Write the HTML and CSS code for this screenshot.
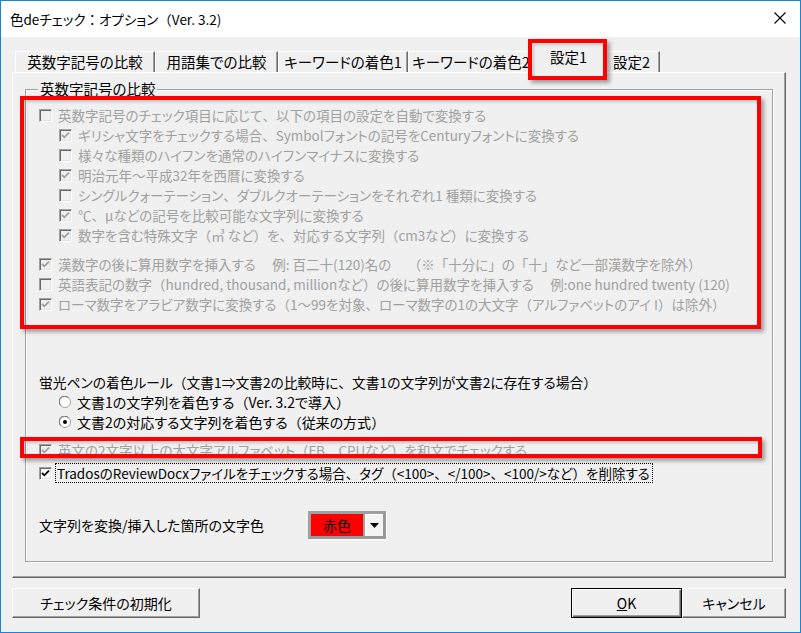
FILE: index.html
```html
<!DOCTYPE html>
<html lang="ja">
<head>
<meta charset="utf-8">
<title>色deチェック：オプション</title>
<link rel="stylesheet" href="styles.css">
</head>
<body>
<div class="window">
  <header class="titlebar">
    <span class="title">色deチェック<span class="fw">：</span>オプション<span class="fw">（</span>Ver. 3.2)</span>
    <svg class="close" width="12" height="12" viewBox="0 0 12 12"><path d="M0.5 0.5 L11.5 11.5 M11.5 0.5 L0.5 11.5" stroke="#000" stroke-width="1.1" fill="none"/></svg>
  </header>
  <div class="client">
    <div class="tabs">
      <div class="tab w1">英数字記号の比較</div>
      <div class="tab w2">用語集での比較</div>
      <div class="tab w3">キーワードの着色1</div>
      <div class="tab w4">キーワードの着色2</div>
      <div class="tab active">設定1</div>
      <div class="tab w6">設定2</div>
    </div>
    <div class="panel">
      <fieldset class="group">
        <legend>英数字記号の比較</legend>
        <div class="opts">
          <div class="row dis"><span class="cb"></span><span>英数字記号のチェック項目に応じて<span class="fw">、</span>以下の項目の設定を自動で変換する</span></div>
          <div class="row dis ind"><span class="cb on"><svg viewBox="0 0 11 11"><path d="M2 5 L4.3 7.3 L9 2.6"/></svg></span><span>ギリシャ文字をチェックする場合<span class="fw">、</span>Symbolフォントの記号をCenturyフォントに変換する</span></div>
          <div class="row dis ind"><span class="cb"></span><span>様々な種類のハイフンを通常のハイフンマイナスに変換する</span></div>
          <div class="row dis ind"><span class="cb on"><svg viewBox="0 0 11 11"><path d="M2 5 L4.3 7.3 L9 2.6"/></svg></span><span>明治元年～平成32年を西暦に変換する</span></div>
          <div class="row dis ind"><span class="cb"></span><span>シングルクォーテーション<span class="fw">、</span>ダブルクオーテーションをそれぞれ1 種類に変換する</span></div>
          <div class="row dis ind"><span class="cb on"><svg viewBox="0 0 11 11"><path d="M2 5 L4.3 7.3 L9 2.6"/></svg></span><span>℃<span class="fw">、</span>µなどの記号を比較可能な文字列に変換する</span></div>
          <div class="row dis ind"><span class="cb on"><svg viewBox="0 0 11 11"><path d="M2 5 L4.3 7.3 L9 2.6"/></svg></span><span>数字を含む特殊文字<span class="fw">（</span>㎥ など<span class="fw">）</span>を<span class="fw">、</span>対応する文字列<span class="fw">（</span>cm3など<span class="fw">）</span>に変換する</span></div>

          <div class="row dis gap1"><span class="cb on"><svg viewBox="0 0 11 11"><path d="M2 5 L4.3 7.3 L9 2.6"/></svg></span><span>漢数字の後に算用数字を挿入する　 例: 百二十(120)名の　 <span class="fw">（</span>※<span class="fw">「</span>十分に<span class="fw">」</span>の<span class="fw">「</span>十<span class="fw">」</span>など一部漢数字を除外<span class="fw">）</span></span></div>
          <div class="row dis"><span class="cb"></span><span>英語表記の数字<span class="fw">（</span>hundred, thousand, millionなど<span class="fw">）</span>の後に算用数字を挿入する　 例:one hundred twenty (120)</span></div>
          <div class="row dis"><span class="cb on"><svg viewBox="0 0 11 11"><path d="M2 5 L4.3 7.3 L9 2.6"/></svg></span><span>ローマ数字をアラビア数字に変換する<span class="fw">（</span>1～99を対象<span class="fw">、</span>ローマ数字の1の大文字<span class="fw">（</span>アルファベットのアイ I<span class="fw">）</span>は除外<span class="fw">）</span></span></div>

          <div class="heading">蛍光ペンの着色ルール<span class="fw">（</span>文書1⇒文書2の比較時に<span class="fw">、</span>文書1の文字列が文書2に存在する場合<span class="fw">）</span></div>
          <div class="row ind radio-row"><svg class="rb" width="12" height="12" viewBox="0 0 12 12"><circle cx="6" cy="6" r="5.5" fill="#fff" stroke="#a0a0a0"/><path d="M1.6 9.4 A5 5 0 0 1 9.4 1.6" stroke="#696969" fill="none"/></svg><span>文書1の文字列を着色する<span class="fw">（</span>Ver. 3.2で導入<span class="fw">）</span></span></div>
          <div class="row ind radio-row"><svg class="rb" width="12" height="12" viewBox="0 0 12 12"><circle cx="6" cy="6" r="5.5" fill="#fff" stroke="#a0a0a0"/><path d="M1.6 9.4 A5 5 0 0 1 9.4 1.6" stroke="#696969" fill="none"/><circle cx="6" cy="6" r="2" fill="#000"/></svg><span>文書2の対応する文字列を着色する<span class="fw">（</span>従来の方式<span class="fw">）</span></span></div>

          <div class="row dis gap3"><span class="cb on"><svg viewBox="0 0 11 11"><path d="M2 5 L4.3 7.3 L9 2.6"/></svg></span><span>英文の2文字以上の大文字アルファベット<span class="fw">（</span>FB<span class="fw">、</span>CPUなど<span class="fw">）</span>を和文でチェックする</span></div>
          <div class="row en trados"><span class="cb on"><svg viewBox="0 0 11 11"><path d="M2 5 L4.3 7.3 L9 2.6"/></svg></span><span class="focus">TradosのReviewDocxファイルをチェックする場合<span class="fw">、</span>タグ<span class="fw">（</span>&lt;100&gt;<span class="fw">、</span>&lt;/100&gt;<span class="fw">、</span>&lt;100/&gt;など<span class="fw">）</span>を削除する</span></div>

          <div class="color-row">
            <span class="color-label">文字列を変換/挿入した箇所の文字色</span>
            <div class="combo">
              <span class="combo-value">赤色</span>
              <span class="combo-btn"><svg width="9" height="5" viewBox="0 0 9 5"><path d="M0 0 H9 L4.5 5 Z" fill="#000"/></svg></span>
            </div>
          </div>
        </div>
      </fieldset>
    </div>
    <div class="buttons">
      <button class="btn reset">チェック条件の初期化</button>
      <div class="right-btns">
        <button class="btn ok default"><u>O</u>K</button>
        <button class="btn cancel">キャンセル</button>
      </div>
    </div>
  </div>

  <div class="hl hl-tab"></div>
  <div class="hl hl-1"></div>
  <div class="hl hl-2"></div>
</div>
</body>
</html>
```

FILE: styles.css
```css
* { box-sizing: border-box; }

body {
  margin: 0;
  background: #fff;
  font-family: "Noto Sans CJK JP", "Noto Sans", sans-serif;
  font-feature-settings: "palt";
  color: #000;
}

.fw { font-feature-settings: normal; }

.window {
  position: relative;
  width: 801px;
  height: 633px;
  border: 1px solid #1883d7;
  background: #f0f0f0;
  display: flex;
  flex-direction: column;
}

.titlebar {
  height: 36px;
  background: #fff;
  display: flex;
  align-items: center;
  justify-content: space-between;
  padding: 0 14px 0 9px;
}

.title {
  font-size: 13.5px;
  line-height: 20px;
}

.close { display: block; margin-top: -2px; }

.client {
  flex: 1;
  padding: 0 14px 0 11px;
  display: flex;
  flex-direction: column;
}

/* tabs */
.tabs {
  height: 35px;
  display: flex;
  align-items: flex-end;
  padding-left: 3px;
  position: relative;
  z-index: 2;
}

.tab {
  height: 21px;
  font-size: 14.5px;
  line-height: 20px;
  text-align: center;
  background: #f0f0f0;
  border-top: 1px solid #fff;
  border-left: 1px solid #fff;
  border-right: 1px solid #696969;
  box-shadow: inset -1px 0 0 #a0a0a0;
  white-space: nowrap;
}
.w1 { width: 140px; }
.w2 { width: 123px; }
.w3 { width: 130px; }
.w4 { width: 126px; }
.w6 { width: 57px; }

.tab.active {
  width: 73px;
  height: 31px;
  margin: 0 -2px -2px;
  line-height: 26px;
  position: relative;
  z-index: 3;
}

/* panel */
.panel {
  height: 506px;
  border: 1px solid;
  border-color: #fff #696969 #696969 #fff;
  box-shadow: inset -1px -1px 0 #a0a0a0;
  padding: 6px 12px 0 12px;
}

.group {
  margin: 0;
  height: 483px;
  padding: 0 0 0 13px;
  border: 1px solid #a0a0a0;
  box-shadow: 1px 1px 0 #fff, inset 1px 1px 0 #fff;
}

.group legend {
  font-size: 14.5px;
  line-height: 20px;
  padding: 0 2px;
  margin-left: -1px;
  background: #f0f0f0;
}

.opts {
  padding-top: 6px;
  display: flex;
  flex-direction: column;
}

.row {
  height: 20px;
  display: flex;
  align-items: center;
  gap: 6px;
  font-size: 13.5px;
  white-space: nowrap;
}
.row.dis { color: #a0a0a0; }
.row.ind { padding-left: 20px; }
.gap1 { margin-top: 9px; }
.gap3 { margin-top: 8px; }

.cb {
  flex: none;
  width: 13px;
  height: 13px;
  border: 1px solid;
  border-color: #a0a0a0 #fff #fff #a0a0a0;
  box-shadow: inset 1px 1px 0 #696969, inset -1px -1px 0 #e3e3e3;
  background: #f0f0f0;
  display: flex;
}
.cb svg { width: 11px; height: 11px; }
.cb svg path { fill: none; stroke: #a0a0a0; stroke-width: 1.8; }
.en .cb { background: #fff; }
.en .cb svg path { stroke: #000; }

.heading {
  margin-top: 58px;
  height: 20px;
  line-height: 20px;
  font-size: 13.75px;
  white-space: nowrap;
}

.radio-row { font-size: 14px; }
.rb { flex: none; }

.trados {
  margin-top: 3px;
  gap: 4px;
}
.focus {
  outline: 1px dotted #000;
  outline-offset: 0;
  line-height: 18px;
  padding: 0 2px 0 1px;
}

.color-row {
  margin-top: 28px;
  display: flex;
  align-items: center;
  height: 28px;
}
.color-label {
  width: 269px;
  font-size: 14px;
}

.combo {
  width: 78px;
  height: 28px;
  display: flex;
  border: 3px solid #a0a0a0;
  border-color: #a0a0a0 #999 #999 #a0a0a0;
  box-shadow: 1px 1px 0 #fff;
  background: #a0a0a0;
  gap: 2px;
}
.combo-value {
  flex: 1;
  background: #ff0000;
  font-size: 14px;
  line-height: 22px;
  text-align: center;
}
.combo-btn {
  width: 18px;
  background: #f4f4f4;
  border-top: 1px solid #fff;
  border-left: 1px solid #fff;
  display: flex;
  align-items: center;
  justify-content: center;
}

/* buttons */
.buttons {
  margin-top: 10px;
  display: flex;
  justify-content: space-between;
}
.right-btns { display: flex; }

.btn {
  font-family: inherit;
  font-feature-settings: "palt";
  font-size: 14px;
  height: 30px;
  margin: 0;
  padding: 0;
  background: #f0f0f0;
  border: 1px solid;
  border-color: #fff #696969 #696969 #fff;
  box-shadow: inset -1px -1px 0 #a0a0a0;
  color: #000;
}
.reset { width: 188px; }
.ok { width: 111px; }
.cancel { width: 104px; }
.btn.default {
  border: 1px solid #000;
  box-shadow: inset 1px 1px 0 #fff, inset -1px -1px 0 #696969, inset -2px -2px 0 #a0a0a0;
}

/* red highlight annotations */
.hl {
  position: absolute;
  border: 4px solid #ff0000;
  box-shadow: 3px 3px 4px rgba(0,0,0,0.35), inset 2px 2px 3px rgba(0,0,0,0.18);
  pointer-events: none;
  z-index: 10;
}
.hl-tab { left: 527px; top: 38px; width: 79px; height: 41px; }
.hl-1 { left: 19px; top: 95px; width: 741px; height: 233px; }
.hl-2 { left: 19px; top: 436px; width: 742px; height: 21px; }
```
